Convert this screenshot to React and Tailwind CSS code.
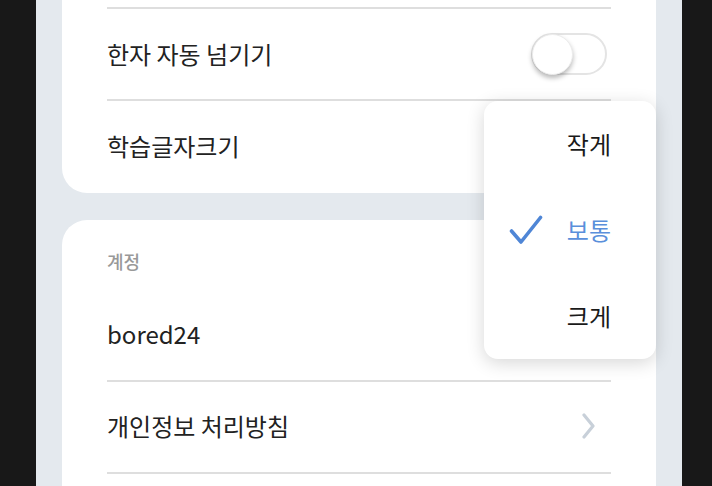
import React from "react";

const font = { fontFamily: '"Noto Sans CJK KR", "Noto Sans", sans-serif' };

function Toggle() {
  return (
    <div className="relative w-[76px] h-[42px] mr-[4px]">
      <div className="absolute inset-0 rounded-full border-2 border-[#e4e4e4] bg-white" />
      <div className="absolute left-[1px] top-[1px] w-[41px] h-[41px] rounded-full bg-white border border-[#ececec] shadow-[0_3px_5px_rgba(0,0,0,0.28)]" />
    </div>
  );
}

function Chevron() {
  return (
    <svg width="16" height="26" viewBox="0 0 16 26" className="mr-[14px]">
      <path d="M3 2 L12 13 L3 24" fill="none" stroke="#c8d0d9" strokeWidth="3.2" strokeLinecap="round" strokeLinejoin="round" />
    </svg>
  );
}

function Check() {
  return (
    <svg width="34" height="30" viewBox="0 0 34 30">
      <path d="M2.5 16 L12 27 L31.5 2.5" fill="none" stroke="#4f86d6" strokeWidth="3.6" strokeLinecap="round" strokeLinejoin="round" />
    </svg>
  );
}

export default function App() {
  return (
    <div className="w-[712px] h-[486px] overflow-hidden bg-[#181818] flex" style={font}>
      <div className="relative ml-[36px] w-[646px] h-full bg-[#e4e9ee] px-[26px]">
        {/* Card 1 */}
        <div className="-mt-[30px] bg-white rounded-[25px] px-[45px] pt-[37px]">
          <div className="h-[94px] border-t-2 border-b-2 border-[#dedede] flex items-center justify-between">
            <span className="text-[24px] text-[#222] leading-none">한자 자동 넘기기</span>
            <Toggle />
          </div>
          <div className="h-[92px] flex items-center pb-[2px]">
            <span className="text-[24px] text-[#222] leading-none">학습글자크기</span>
          </div>
        </div>

        {/* Card 2 */}
        <div className="mt-[27px] bg-white rounded-[25px] px-[45px] pt-[29px] pb-[40px]">
          <div className="text-[18px] font-medium leading-[24px] text-[#999] pb-[16px]">계정</div>
          <div className="h-[93px] border-b-2 border-[#dedede] flex items-center pb-[2px]">
            <span className="text-[24px] text-[#222] leading-none">bored24</span>
          </div>
          <div className="h-[92px] border-b-2 border-[#dedede] flex items-center justify-between pb-[2px]">
            <span className="text-[24px] text-[#222] leading-none">개인정보 처리방침</span>
            <Chevron />
          </div>
        </div>

        {/* Dropdown menu */}
        <div className="absolute left-[448px] top-[101px] w-[172px] h-[258px] bg-white rounded-[14px] shadow-[0_4px_18px_rgba(0,0,0,0.16)]">
          <div className="h-[86px] flex items-center justify-end pr-[45px]">
            <span className="text-[24px] text-[#1a1a1a] leading-none">작게</span>
          </div>
          <div className="h-[86px] flex items-center justify-between pl-[25px] pr-[45px]">
            <Check />
            <span className="text-[24px] text-[#5a8fdb] leading-none">보통</span>
          </div>
          <div className="h-[86px] flex items-center justify-end pr-[45px]">
            <span className="text-[24px] text-[#1a1a1a] leading-none">크게</span>
          </div>
        </div>
      </div>
    </div>
  );
}
